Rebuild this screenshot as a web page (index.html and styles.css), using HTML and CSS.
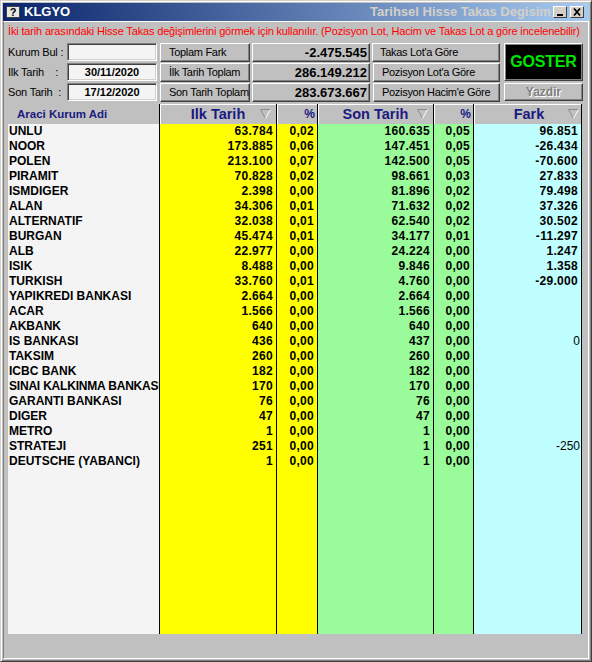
FILE: index.html
```html
<!DOCTYPE html>
<html lang="tr">
<head>
<meta charset="utf-8">
<title>KLGYO - Tarihsel Hisse Takas Degisim</title>
<link rel="stylesheet" href="styles.css">
</head>
<body>
<div class="window">
  <div class="titlebar">
    <span class="app-icon">?</span>
    <span class="title-main">KLGYO</span>
    <span class="title-sub">Tarihsel Hisse Takas Degisim</span>
    <span class="tb-btn"><svg width="12" height="10" viewBox="0 0 12 10"><rect x="3" y="7" width="6" height="2" fill="#000"/></svg></span>
    <span class="tb-btn close"><svg width="12" height="10" viewBox="0 0 12 10"><path d="M3 1.5 L9 8.5 M9 1.5 L3 8.5" stroke="#000" stroke-width="1.8" fill="none"/></svg></span>
  </div>
  <div class="panel">
    <div class="info">İki tarih arasındaki Hisse Takas değişimlerini görmek için kullanılır. (Pozisyon Lot, Hacim ve Takas Lot a göre incelenebilir)</div>
    <div class="controls">
      <span class="lbl">Kurum Bul :</span>
      <div class="field"></div>
      <div class="btn">Toplam Fark</div>
      <div class="val">-2.475.545</div>
      <div class="btn">Takas Lot'a Göre</div>
      <div class="go">GOSTER</div>
      <span class="lbl">Ilk Tarih    :</span>
      <div class="field">30/11/2020</div>
      <div class="btn">İlk Tarih Toplam</div>
      <div class="val">286.149.212</div>
      <div class="btn">Pozisyon Lot'a Göre</div>
      <span class="lbl">Son Tarih  :</span>
      <div class="field">17/12/2020</div>
      <div class="btn">Son Tarih Toplam</div>
      <div class="val">283.673.667</div>
      <div class="btn">Pozisyon Hacim'e Göre</div>
      <div class="print">Yazdir</div>
    </div>
    <div class="grid">
      <div class="h c-name"><span class="h-first">Araci Kurum Adi</span></div>
      <div class="h c-ilk"><span class="h-text">Ilk Tarih</span><svg class="sort" width="11" height="10" viewBox="0 0 11 10"><path d="M0.5 0.5 H10.5" stroke="#8c8c8c"/><path d="M0.5 0.5 L5.5 9.5" stroke="#8c8c8c"/><path d="M10.5 0.5 L5.5 9.5" stroke="#fff"/></svg></div>
      <div class="h c-ilkp"><span class="h-pct">%</span></div>
      <div class="h c-son"><span class="h-text">Son Tarih</span><svg class="sort" width="11" height="10" viewBox="0 0 11 10"><path d="M0.5 0.5 H10.5" stroke="#8c8c8c"/><path d="M0.5 0.5 L5.5 9.5" stroke="#8c8c8c"/><path d="M10.5 0.5 L5.5 9.5" stroke="#fff"/></svg></div>
      <div class="h c-sonp"><span class="h-pct">%</span></div>
      <div class="h c-fark"><span class="h-text">Fark</span><svg class="sort fark-sort" width="11" height="10" viewBox="0 0 11 10"><path d="M0.5 0.5 H10.5" stroke="#8c8c8c"/><path d="M0.5 0.5 L5.5 9.5" stroke="#8c8c8c"/><path d="M10.5 0.5 L5.5 9.5" stroke="#fff"/></svg></div>

      <div class="c c-name">UNLU</div><div class="c c-ilk">63.784</div><div class="c c-ilkp">0,02</div><div class="c c-son">160.635</div><div class="c c-sonp">0,05</div><div class="c c-fark">96.851</div>
      <div class="c c-name">NOOR</div><div class="c c-ilk">173.885</div><div class="c c-ilkp">0,06</div><div class="c c-son">147.451</div><div class="c c-sonp">0,05</div><div class="c c-fark">-26.434</div>
      <div class="c c-name">POLEN</div><div class="c c-ilk">213.100</div><div class="c c-ilkp">0,07</div><div class="c c-son">142.500</div><div class="c c-sonp">0,05</div><div class="c c-fark">-70.600</div>
      <div class="c c-name">PIRAMIT</div><div class="c c-ilk">70.828</div><div class="c c-ilkp">0,02</div><div class="c c-son">98.661</div><div class="c c-sonp">0,03</div><div class="c c-fark">27.833</div>
      <div class="c c-name">ISMDIGER</div><div class="c c-ilk">2.398</div><div class="c c-ilkp">0,00</div><div class="c c-son">81.896</div><div class="c c-sonp">0,02</div><div class="c c-fark">79.498</div>
      <div class="c c-name">ALAN</div><div class="c c-ilk">34.306</div><div class="c c-ilkp">0,01</div><div class="c c-son">71.632</div><div class="c c-sonp">0,02</div><div class="c c-fark">37.326</div>
      <div class="c c-name">ALTERNATIF</div><div class="c c-ilk">32.038</div><div class="c c-ilkp">0,01</div><div class="c c-son">62.540</div><div class="c c-sonp">0,02</div><div class="c c-fark">30.502</div>
      <div class="c c-name">BURGAN</div><div class="c c-ilk">45.474</div><div class="c c-ilkp">0,01</div><div class="c c-son">34.177</div><div class="c c-sonp">0,01</div><div class="c c-fark">-11.297</div>
      <div class="c c-name">ALB</div><div class="c c-ilk">22.977</div><div class="c c-ilkp">0,00</div><div class="c c-son">24.224</div><div class="c c-sonp">0,00</div><div class="c c-fark">1.247</div>
      <div class="c c-name">ISIK</div><div class="c c-ilk">8.488</div><div class="c c-ilkp">0,00</div><div class="c c-son">9.846</div><div class="c c-sonp">0,00</div><div class="c c-fark">1.358</div>
      <div class="c c-name">TURKISH</div><div class="c c-ilk">33.760</div><div class="c c-ilkp">0,01</div><div class="c c-son">4.760</div><div class="c c-sonp">0,00</div><div class="c c-fark">-29.000</div>
      <div class="c c-name">YAPIKREDI BANKASI</div><div class="c c-ilk">2.664</div><div class="c c-ilkp">0,00</div><div class="c c-son">2.664</div><div class="c c-sonp">0,00</div><div class="c c-fark"></div>
      <div class="c c-name">ACAR</div><div class="c c-ilk">1.566</div><div class="c c-ilkp">0,00</div><div class="c c-son">1.566</div><div class="c c-sonp">0,00</div><div class="c c-fark"></div>
      <div class="c c-name">AKBANK</div><div class="c c-ilk">640</div><div class="c c-ilkp">0,00</div><div class="c c-son">640</div><div class="c c-sonp">0,00</div><div class="c c-fark"></div>
      <div class="c c-name">IS BANKASI</div><div class="c c-ilk">436</div><div class="c c-ilkp">0,00</div><div class="c c-son">437</div><div class="c c-sonp">0,00</div><div class="c c-fark reg">0</div>
      <div class="c c-name">TAKSIM</div><div class="c c-ilk">260</div><div class="c c-ilkp">0,00</div><div class="c c-son">260</div><div class="c c-sonp">0,00</div><div class="c c-fark"></div>
      <div class="c c-name">ICBC BANK</div><div class="c c-ilk">182</div><div class="c c-ilkp">0,00</div><div class="c c-son">182</div><div class="c c-sonp">0,00</div><div class="c c-fark"></div>
      <div class="c c-name narrow">SINAI KALKINMA BANKASI</div><div class="c c-ilk">170</div><div class="c c-ilkp">0,00</div><div class="c c-son">170</div><div class="c c-sonp">0,00</div><div class="c c-fark"></div>
      <div class="c c-name">GARANTI BANKASI</div><div class="c c-ilk">76</div><div class="c c-ilkp">0,00</div><div class="c c-son">76</div><div class="c c-sonp">0,00</div><div class="c c-fark"></div>
      <div class="c c-name">DIGER</div><div class="c c-ilk">47</div><div class="c c-ilkp">0,00</div><div class="c c-son">47</div><div class="c c-sonp">0,00</div><div class="c c-fark"></div>
      <div class="c c-name">METRO</div><div class="c c-ilk">1</div><div class="c c-ilkp">0,00</div><div class="c c-son">1</div><div class="c c-sonp">0,00</div><div class="c c-fark"></div>
      <div class="c c-name">STRATEJI</div><div class="c c-ilk">251</div><div class="c c-ilkp">0,00</div><div class="c c-son">1</div><div class="c c-sonp">0,00</div><div class="c c-fark reg">-250</div>
      <div class="c c-name">DEUTSCHE (YABANCI)</div><div class="c c-ilk">1</div><div class="c c-ilkp">0,00</div><div class="c c-son">1</div><div class="c c-sonp">0,00</div><div class="c c-fark"></div>

      <div class="c c-name"></div><div class="c c-ilk"></div><div class="c c-ilkp"></div><div class="c c-son"></div><div class="c c-sonp"></div><div class="c c-fark"></div>
    </div>
  </div>
</div>
</body>
</html>
```
FILE: styles.css
```css
html, body {
  margin: 0;
  padding: 0;
  background: #c0c0c0;
}

body {
  font-family: "Liberation Sans", Arial, sans-serif;
  color: #000;
}

.window {
  width: 592px;
  height: 662px;
  box-sizing: border-box;
  border: 1px solid;
  border-color: #d4d0c8 #404040 #404040 #d4d0c8;
  box-shadow: inset 1px 1px #fff, inset -1px -1px #808080;
  padding: 2px;
  display: flex;
  flex-direction: column;
  background: #c0c0c0;
}

/* ---------- title bar ---------- */
.titlebar {
  height: 18px;
  flex: none;
  display: flex;
  align-items: center;
  background: linear-gradient(90deg, #0a246a 0%, #a6caf0 100%);
}

.app-icon {
  width: 14px;
  height: 12px;
  margin-left: 3px;
  box-sizing: border-box;
  background: #e8e8e8;
  border: 1px solid #404040;
  color: #000;
  font-size: 11px;
  font-weight: bold;
  line-height: 10px;
  text-align: center;
}

.title-main {
  margin-left: 4px;
  color: #fff;
  font-size: 13px;
  font-weight: bold;
  line-height: 18px;
}

.title-sub {
  margin-left: auto;
  margin-right: 1px;
  width: 182px;
  overflow: hidden;
  white-space: nowrap;
  color: #d4d0c8;
  font-size: 13px;
  font-weight: bold;
  line-height: 18px;
}

.tb-btn {
  width: 14px;
  height: 12px;
  box-sizing: border-box;
  background: #d4d0c8;
  border-style: solid;
  border-width: 1px;
  border-color: #fff #404040 #404040 #fff;
  display: flex;
  align-items: center;
  justify-content: center;
}

.tb-btn svg {
  display: block;
}

.tb-btn.close {
  margin-left: 3px;
  margin-right: 5px;
}

/* ---------- panel ---------- */
.panel {
  flex: 1;
  display: flex;
  flex-direction: column;
  border-style: solid;
  border-width: 1px;
  border-color: #fff #fff #fff #808080;
  padding: 0 4px 0 4px;
}

.info {
  height: 18px;
  line-height: 18px;
  margin-bottom: 3px;
  color: #f00;
  font-size: 11px;
  white-space: nowrap;
  overflow: hidden;
  letter-spacing: -0.16px;
}

/* ---------- controls ---------- */
.controls {
  display: grid;
  grid-template-columns: 59px 90px 93px 120px 130px 83px;
  grid-template-rows: repeat(3, 19px);
  row-gap: 1px;
  margin-bottom: 2px;
  font-size: 11px;
}

.lbl {
  white-space: pre;
  line-height: 19px;
  letter-spacing: -0.2px;
}

.field {
  height: 18px;
  box-sizing: border-box;
  background: #f4f4f4;
  border-style: solid;
  border-width: 1px;
  border-color: #808080 #fff #fff #808080;
  box-shadow: inset 1px 1px #404040, inset -1px -1px #d4d0c8;
  font-weight: bold;
  text-align: center;
  line-height: 16px;
}

.btn,
.val,
.print {
  box-sizing: border-box;
  background: #c0c0c0;
  border-style: solid;
  border-width: 1px;
  border-color: #fff #404040 #404040 #fff;
  box-shadow: inset -1px -1px #808080;
  white-space: nowrap;
  overflow: hidden;
}

.btn {
  margin-left: 3px;
  padding-left: 8px;
  line-height: 17px;
  letter-spacing: -0.3px;
}

.controls .btn:nth-child(5n) {
  margin-left: 2px;
  padding-left: 7px;
}

.val {
  margin-left: 2px;
  padding-right: 2px;
  text-align: right;
  font-size: 13px;
  font-weight: bold;
  line-height: 17px;
}

.go {
  grid-column: 6;
  grid-row: 1 / span 2;
  margin-left: 4px;
  height: 38px;
  box-sizing: border-box;
  background: #000;
  border-style: solid;
  border-width: 1px;
  border-color: #fff #404040 #404040 #fff;
  box-shadow: inset 1px 1px #808080, inset -1px -1px #808080;
  color: #00e600;
  font-size: 16px;
  font-weight: bold;
  letter-spacing: -0.2px;
  display: flex;
  align-items: center;
  justify-content: center;
}

.print {
  grid-column: 6;
  margin-left: 4px;
  height: 18px;
  color: #808080;
  text-shadow: 1px 1px #fff;
  font-size: 12px;
  font-weight: bold;
  text-align: center;
  line-height: 16px;
}

/* ---------- data grid ---------- */
.grid {
  width: 574px;
  height: 530px;
  box-sizing: border-box;
  display: grid;
  grid-template-columns: 151px 117px 41px 116px 40px 108px;
  grid-template-rows: 20px repeat(23, 15px) 1fr;
  border-right: 1px solid #000;
}

.c {
  font-size: 12px;
  font-weight: bold;
  line-height: 15px;
  white-space: nowrap;
  overflow: hidden;
  text-align: right;
  padding-right: 3px;
  letter-spacing: 0.3px;
}

.c.c-name {
  text-align: left;
  padding-left: 1px;
  padding-right: 0;
  letter-spacing: 0;
  background: #f4f4f4;
}

.c.c-name.narrow {
  letter-spacing: -0.2px;
}

.c-ilk,
.c-ilkp,
.c-son,
.c-sonp,
.c-fark {
  border-left: 1px solid #000;
}

.c-ilk,
.c-ilkp {
  background: #ffff00;
}

.c-son,
.c-sonp {
  background: #99fb99;
}

.c-fark {
  background: #c0ffff;
}

.c.reg {
  font-weight: normal;
  letter-spacing: 0;
  padding-right: 1px;
}

.h {
  background: #c0c0c0;
  box-shadow: inset 0 1px #fff, inset 1px 0 #fff;
  display: flex;
  align-items: center;
  color: #1a1a80;
  font-weight: bold;
  overflow: hidden;
  white-space: nowrap;
}

.h.c-name {
  box-shadow: none;
  background: #c0c0c0;
}

.h-first {
  margin-left: 9px;
  font-size: 11.5px;
}

.h-text {
  flex: 1;
  text-align: center;
  padding-left: 16px;
  font-size: 14.5px;
}

.sort {
  flex: none;
  display: block;
  margin-right: 5px;
}

.fark-sort {
  margin-right: 2px;
}

.h-pct {
  flex: 1;
  text-align: right;
  padding-right: 2px;
  font-size: 12px;
}
```
